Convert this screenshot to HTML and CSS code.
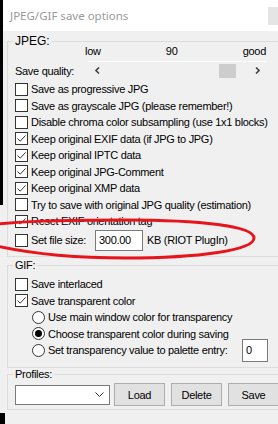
FILE: index.html
```html
<!DOCTYPE html>
<html lang="en">
<head>
    <meta charset="UTF-8">
    <title>JPEG/GIF save options</title>
    <link rel="stylesheet" href="styles.css">
</head>
<body>
    <div class="titlebar">
        <span class="title">JPEG/GIF save options</span>
        <span class="close"></span>
    </div>
    <div class="content">
        <fieldset class="group jpeg">
            <legend>JPEG:</legend>
            <div class="scale"><span>low</span><span>90</span><span>good</span></div>
            <div class="track"></div>
            <div class="quality">
                <span class="q-label">Save quality:</span>
                <svg class="arrow" width="5" height="7" viewBox="0 0 5 7"><path d="M4 0.5 L1 3.5 L4 6.5" fill="none" stroke="#444" stroke-width="1.6"/></svg>
                <span class="thumb"></span>
                <svg class="arrow right" width="5" height="7" viewBox="0 0 5 7"><path d="M1 0.5 L4 3.5 L1 6.5" fill="none" stroke="#444" stroke-width="1.6"/></svg>
            </div>
            <div class="opt first"><span class="box"></span>Save as progressive JPG</div>
            <div class="opt"><span class="box"></span>Save as grayscale JPG (please remember!)</div>
            <div class="opt"><span class="box"></span>Disable chroma color subsampling (use 1x1 blocks)</div>
            <div class="opt"><span class="box checked"></span>Keep original EXIF data (if JPG to JPG)</div>
            <div class="opt"><span class="box checked"></span>Keep original IPTC data</div>
            <div class="opt"><span class="box checked"></span>Keep original JPG-Comment</div>
            <div class="opt"><span class="box checked"></span>Keep original XMP data</div>
            <div class="opt"><span class="box"></span>Try to save with original JPG quality (estimation)</div>
            <div class="opt"><span class="box checked"></span>Reset EXIF orientation tag</div>
            <div class="opt filesize">
                <span class="box"></span>
                <span class="fs-label">Set file size:</span>
                <span class="field size">300.00</span>
                <span class="unit">KB (RIOT PlugIn)</span>
            </div>
        </fieldset>

        <fieldset class="group gif">
            <legend>GIF:</legend>
            <div class="opt first"><span class="box"></span>Save interlaced</div>
            <div class="opt"><span class="box checked"></span>Save transparent color</div>
            <div class="opt sub"><span class="radio"></span>Use main window color for transparency</div>
            <div class="opt sub"><span class="radio on"></span>Choose transparent color during saving</div>
            <div class="opt sub"><span class="radio"></span><span class="pal-label">Set transparency value to palette entry:</span><span class="field palette">0</span></div>
        </fieldset>

        <fieldset class="group profiles">
            <legend>Profiles:</legend>
            <div class="prof-row">
                <span class="combo">
                    <svg width="9" height="5" viewBox="0 0 9 5"><path d="M0.5 0.5 L4.5 4.5 L8.5 0.5" fill="none" stroke="#333" stroke-width="1"/></svg>
                </span>
                <span class="btn load">Load</span>
                <span class="btn">Delete</span>
                <span class="btn">Save</span>
            </div>
        </fieldset>
    </div>

    <svg class="mark" width="278" height="424" viewBox="0 0 278 424">
        <path d="M254 238 C254 250 200 258 125 258 C60 258 10 250 -20 242 L-20 226 C20 221 60 220 125 220 C200 220 254 226 254 238 Z" fill="none" stroke="#e8141c" stroke-width="3"/>
    </svg>
</body>
</html>
```

FILE: styles.css
```css
* { box-sizing: border-box; }
body {
    margin: 0; width: 278px; height: 424px; overflow: hidden; position: relative;
    background: #f0f0f0; color: #000;
    font-family: "Liberation Sans", Arial, sans-serif; font-size: 11px; letter-spacing: -0.3px;
}
body::before {
    content: ""; position: absolute; left: 0; top: 0; width: 3px; height: 205px; background: #000;
}
body::after {
    content: ""; position: absolute; left: 0; bottom: 0; width: 5px; height: 11px; background: #000;
}

.titlebar {
    height: 31px; margin-left: 3px; background: #fff;
    display: flex; align-items: center; justify-content: space-between;
}
.title {
    padding-left: 7px; color: #9a9a9a; letter-spacing: 0;
    font-family: "Noto Sans", "Open Sans", sans-serif; font-size: 11.5px;
}
.close { width: 10px; height: 18px; background: #e5e5e5; }

.content { padding-left: 7px; }
.group {
    margin: 0; padding: 0; min-width: 0; width: 290px;
    border: 1px solid #dcdcdc;
}
.group legend { margin-left: 5px; padding: 0 2px; line-height: 12px; }
.jpeg legend { font-size: 12px; letter-spacing: 0; }
.jpeg { margin-top: 4px; padding-bottom: 5.5px; }
.gif { margin-top: 2px; padding-bottom: 8.5px; }
.profiles { padding-bottom: 3px; }

.scale {
    display: flex; justify-content: space-between;
    width: 181px; margin: -2px 0 0 77px; line-height: 12px;
}
.track { width: 178px; height: 1px; margin: 4px 0 0 80px; background: #fff; }
.quality { display: flex; align-items: center; height: 15px; margin-top: 1px; padding-left: 7px; }
.q-label { width: 80px; }
.arrow { display: block; }
.thumb { width: 17px; height: 14px; margin-left: 119px; background: #cdcdcd; }
.arrow.right { margin-left: 19px; }

.opt { display: flex; align-items: center; gap: 3px; height: 16.5px; padding-left: 7px; white-space: nowrap; }
.jpeg .opt.first { margin-top: 3px; }
.gif .opt.first { margin-top: 5px; }
.opt.sub { padding-left: 24px; }

.box {
    width: 13px; height: 13px; flex: none; background: #fff; border: 1px solid #333;
}
.box.checked {
    background: #fff url("data:image/svg+xml,%3Csvg xmlns='http://www.w3.org/2000/svg' width='11' height='11'%3E%3Cpath d='M1.5 5.5 L4.2 8.2 L9.5 2.5' fill='none' stroke='%23333' stroke-width='1'/%3E%3C/svg%3E") no-repeat center;
}
.radio {
    width: 13px; height: 13px; flex: none; border-radius: 50%;
    background: #fff; border: 1px solid #333;
    display: flex; align-items: center; justify-content: center;
}
.radio.on::after { content: ""; width: 7px; height: 7px; border-radius: 50%; background: #000; }

.filesize { height: 21px; }
.fs-label { width: 61px; }
.field {
    display: flex; align-items: center; background: #fff;
    border: 1px solid #7a7a7a; padding-left: 3px; flex: none;
}
.size { width: 48px; height: 21px; }
.unit { margin-left: 1px; }
.pal-label { width: 191px; }
.palette { width: 26px; height: 23px; }

.prof-row { display: flex; align-items: center; height: 23px; margin-top: 3px; padding-left: 7px; }
.combo {
    width: 95px; height: 20px; background: #fff; border: 1px solid #7a7a7a;
    display: flex; align-items: center; justify-content: flex-end; padding-right: 5px;
}
.combo svg { display: block; }
.btn {
    width: 51px; height: 23px; margin-left: 6px;
    display: flex; align-items: center; justify-content: center;
    background: #e1e1e1; border: 1px solid #adadad;
}
.btn.load { margin-left: 4px; }

.mark { position: absolute; left: 0; top: 0; pointer-events: none; }
```
